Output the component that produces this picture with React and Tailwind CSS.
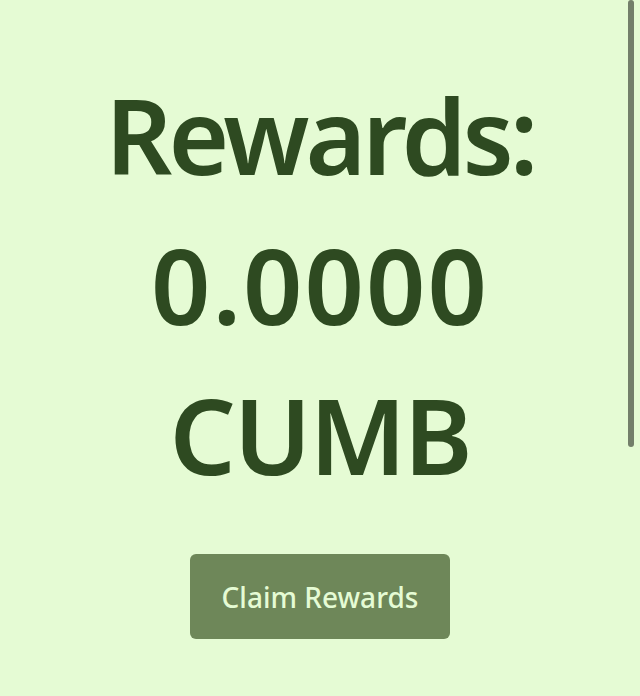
export default function App() {
  return (
    <div className="relative min-h-[696px] bg-[#e5fbd4] font-['Noto_Sans',sans-serif] overflow-hidden">
      <div className="flex flex-col items-center pt-[60px]">
        <h1 className="text-center text-[#2e4a21] text-[104px] leading-[150px] font-semibold">
          <span className="block tracking-[-4px]">Rewards:</span>
          <span className="block tracking-[2px]">0.0000</span>
          <span className="block tracking-[-2px]">CUMB</span>
        </h1>
        <button className="mt-[44px] w-[260px] h-[85px] rounded-md bg-[#6e8759] text-[#e5fbd4] text-[28px] font-medium">
          Claim Rewards
        </button>
      </div>
      {/* scroll thumb */}
      <div className="absolute right-[6px] top-0 w-[6px] h-[447px] rounded-full bg-[#737f6a]" />
    </div>
  );
}
